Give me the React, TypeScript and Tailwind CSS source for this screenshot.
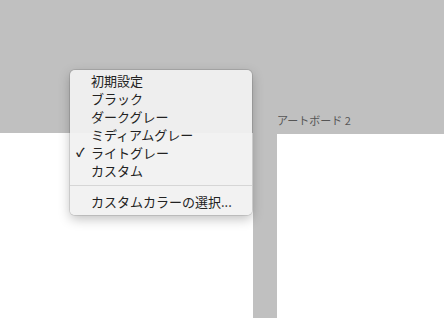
const items = [
  { label: "初期設定" },
  { label: "ブラック" },
  { label: "ダークグレー" },
  { label: "ミディアムグレー" },
  { label: "ライトグレー", checked: true },
  { label: "カスタム" },
];

function MenuRow({ label, checked }: { label: string; checked?: boolean }) {
  return (
    <div className="flex h-[18px] items-center">
      <span className="w-[21px] pl-[6px] text-[12px] font-bold leading-none text-[#222]">
        {checked ? "✓" : ""}
      </span>
      <span className="text-[13px] leading-none text-[#222]">{label}</span>
    </div>
  );
}

export default function App() {
  return (
    <div
      className="relative h-[318px] w-[444px] overflow-hidden bg-[#c0c0c0]"
      style={{ fontFamily: '"Noto Sans CJK JP", "Noto Sans", sans-serif' }}
    >
      {/* Artboards */}
      <div className="flex h-full pt-[108px]">
        <div className="flex w-[253px] flex-col">
          <div className="h-[25px]" />
          <div className="flex-1 bg-white" />
        </div>
        <div className="ml-[24px] flex flex-1 flex-col">
          <div className="flex h-[26px] items-center pb-[2px] text-[11px] text-[#555]">
            アートボード 2
          </div>
          <div className="flex-1 bg-white" />
        </div>
      </div>

      {/* Context menu */}
      <div className="absolute left-[70px] top-[70px] w-[182px] rounded-[5px] bg-[rgba(241,241,241,0.93)] pb-[5px] pt-[1px] shadow-[0_4px_12px_rgba(0,0,0,0.25)] ring-1 ring-black/10">
        {items.map((it) => (
          <MenuRow key={it.label} label={it.label} checked={it.checked} />
        ))}
        <div className="my-[6px] h-px bg-[#d6d6d6]" />
        <MenuRow label="カスタムカラーの選択..." />
      </div>
    </div>
  );
}
